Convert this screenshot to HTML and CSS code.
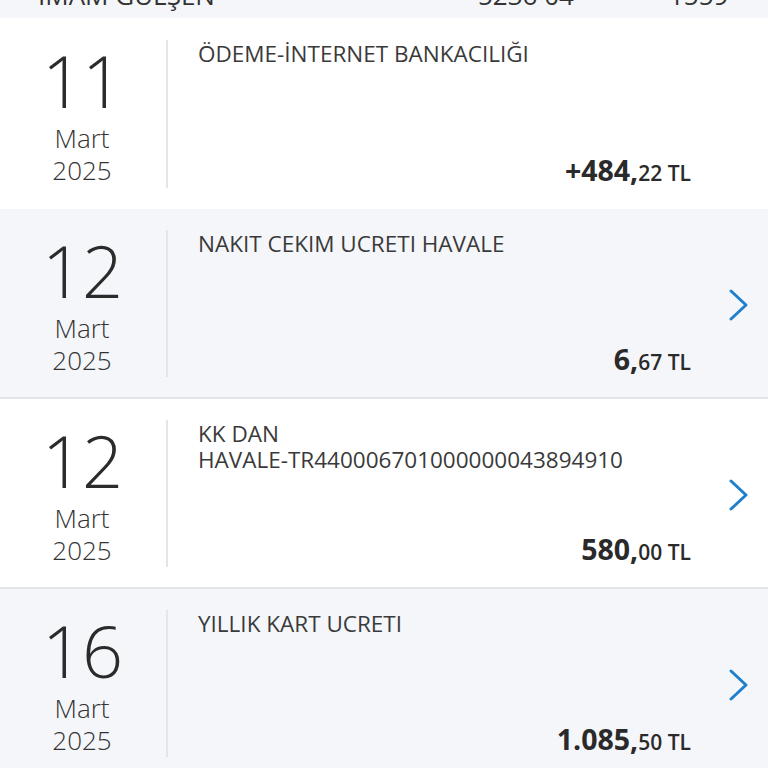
FILE: index.html
```html
<!DOCTYPE html>
<html lang="tr">
<head>
<meta charset="utf-8">
<link rel="stylesheet" href="styles.css">
</head>
<body>
<div class="strip">
  <div class="strip-inner">
    <span class="s-name">İMAM GÜLŞEN</span>
    <span class="s-card">5236 04</span>
    <span class="s-last">1559</span>
  </div>
</div>
<div class="list">
  <div class="row first white">
    <div class="date"><div class="day">11</div><div class="mon">Mart</div><div class="yr">2025</div></div>
    <div class="info">
      <div class="desc">ÖDEME-İNTERNET BANKACILIĞI</div>
      <div class="amt"><b>+484,</b><span>22 TL</span></div>
    </div>
    <div class="go"></div>
  </div>
  <div class="row gray bordered">
    <div class="date"><div class="day">12</div><div class="mon">Mart</div><div class="yr">2025</div></div>
    <div class="info">
      <div class="desc">NAKIT CEKIM UCRETI HAVALE</div>
      <div class="amt"><b>6,</b><span>67 TL</span></div>
    </div>
    <div class="go"><svg class="chev" viewBox="0 0 22 34" width="22" height="34"><polyline points="3,3 18,17 3,31" fill="none" stroke="#1e80cc" stroke-width="3" stroke-linecap="round" stroke-linejoin="round"/></svg></div>
  </div>
  <div class="row white bordered">
    <div class="date"><div class="day">12</div><div class="mon">Mart</div><div class="yr">2025</div></div>
    <div class="info">
      <div class="desc">KK DAN <span class="nw">HAVALE-TR440006701000000043894910</span></div>
      <div class="amt"><b>580,</b><span>00 TL</span></div>
    </div>
    <div class="go"><svg class="chev" viewBox="0 0 22 34" width="22" height="34"><polyline points="3,3 18,17 3,31" fill="none" stroke="#1e80cc" stroke-width="3" stroke-linecap="round" stroke-linejoin="round"/></svg></div>
  </div>
  <div class="row gray">
    <div class="date"><div class="day">16</div><div class="mon">Mart</div><div class="yr">2025</div></div>
    <div class="info">
      <div class="desc">YILLIK KART UCRETI</div>
      <div class="amt"><b>1.085,</b><span>50 TL</span></div>
    </div>
    <div class="go"><svg class="chev" viewBox="0 0 22 34" width="22" height="34"><polyline points="3,3 18,17 3,31" fill="none" stroke="#1e80cc" stroke-width="3" stroke-linecap="round" stroke-linejoin="round"/></svg></div>
  </div>
</div>
</body>
</html>
```
FILE: styles.css
```css
* { box-sizing: border-box; }
html, body { margin: 0; padding: 0; }
body {
  width: 768px;
  height: 768px;
  overflow: hidden;
  background: #ffffff;
  font-family: "Open Sans", "Liberation Sans", sans-serif;
  color: #2e2e2e;
}
.strip {
  height: 18px;
  overflow: hidden;
  background: #f5f6fa;
}
.strip-inner {
  display: flex;
  margin-top: -20px;
  font-size: 26px;
  line-height: 30px;
  color: #333333;
  padding-left: 38px;
  white-space: nowrap;
}
.s-name { width: 440px; flex: none; }
.s-card { width: 191px; flex: none; }
.list { display: flex; flex-direction: column; }
.row {
  display: flex;
  height: 188px;
  padding: 21px 0 18px 0;
}
.row.first { height: 191px; padding-top: 22px; padding-bottom: 19px; }
.row.bordered { height: 190px; border-bottom: 2px solid #e2e4e9; }
.white { background: #ffffff; }
.gray { background: #f5f6fa; }
.date {
  width: 168px;
  flex: none;
  border-right: 2px solid #e3e5e9;
  text-align: center;
  padding-top: 4px;
  padding-right: 2px;
  color: #2b2b2b;
  margin-bottom: 2px;
}
.day {
  font-size: 72px;
  font-weight: 300;
  line-height: 72px;
  letter-spacing: -1px;
}
.mon, .yr {
  font-size: 26px;
  font-weight: 300;
  line-height: 32px;
  color: #333333;
}
.mon { margin-top: 6px; }
.info {
  flex: 1;
  display: flex;
  flex-direction: column;
  justify-content: space-between;
  padding-left: 30px;
}
.desc {
  font-size: 22.5px;
  line-height: 26px;
  color: #3a3a3a;
  padding-top: 1px;
  max-width: 470px;
}
.nw { white-space: nowrap; }
.amt {
  text-align: right;
  line-height: 30px;
  color: #2a2a2a;
}
.amt b { font-size: 28.5px; font-weight: 700; }
.amt span { font-size: 21px; font-weight: 600; }
.go {
  width: 77px;
  flex: none;
  display: flex;
  align-items: center;
  padding-left: 37px;
}
.chev { display: block; }
```
